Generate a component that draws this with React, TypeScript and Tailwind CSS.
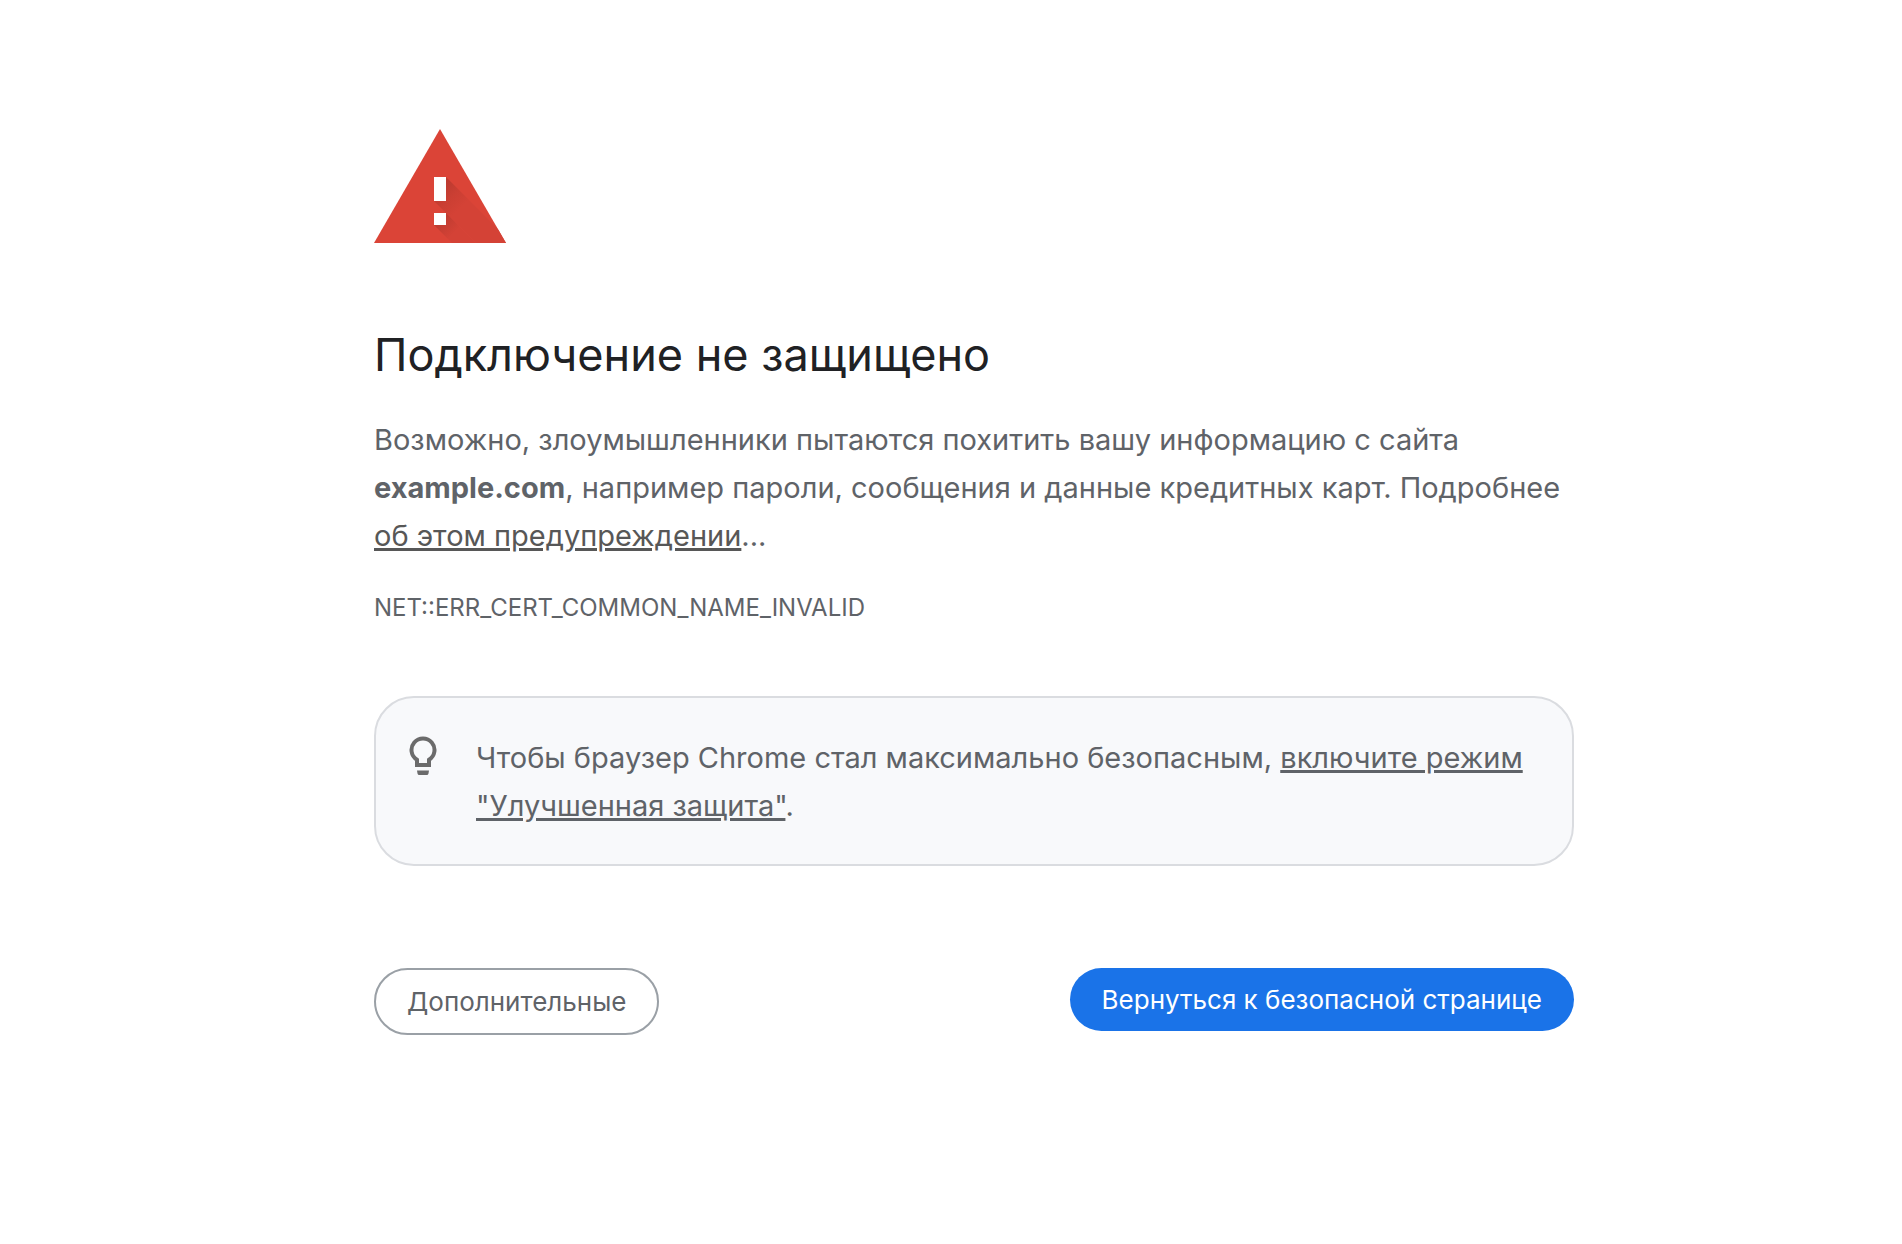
import React from 'react';

function WarningIcon() {
  return (
    <svg viewBox="0 0 132 114" className="block w-[132px] h-[114px]" role="img" aria-label="Предупреждение">
      <defs>
        <clipPath id="triangle">
          <path d="M66 0L132 114H0Z" />
        </clipPath>
        <linearGradient id="barShadow" gradientUnits="userSpaceOnUse" x1="66" y1="60" x2="86" y2="80">
          <stop offset="0" stopColor="#bd3b30" />
          <stop offset="0.5" stopColor="#cb3f33" />
          <stop offset="1" stopColor="#d44236" />
        </linearGradient>
        <linearGradient id="dotShadow" gradientUnits="userSpaceOnUse" x1="66" y1="90" x2="80" y2="104">
          <stop offset="0" stopColor="#bd3b30" />
          <stop offset="1" stopColor="#d44236" />
        </linearGradient>
      </defs>
      <path d="M66 0L132 114H0Z" fill="#db4437" />
      <g clipPath="url(#triangle)">
        <path d="M72 48L138 114H102L60 72Z" fill="url(#barShadow)" />
        <path d="M72 84L102 114H78L60 96Z" fill="url(#dotShadow)" />
      </g>
      <path d="M60 48h12v24H60zM60 84h12v12H60z" fill="#fff" />
    </svg>
  );
}

function BulbIcon() {
  return (
    <svg viewBox="0 0 30 40" className="block w-[30px] h-10 shrink-0" aria-hidden="true">
      <path d="M9 29V23.8A11.5 11.5 0 1 1 21 23.8V29Z" fill="none" stroke="#6b6b6b" strokeWidth="4" />
      <path d="M9 34.5h12l-.5 3a1.8 1.8 0 0 1-1.8 1.5h-7.400a1.8 1.8 0 0 1-1.8-1.5z" fill="#6b6b6b" />
    </svg>
  );
}

export default function App() {
  return (
    <div className="min-h-screen bg-white pl-[46px] pt-[129px] pb-24 text-[#5f6368] font-['Inter','Liberation_Sans',sans-serif]">
      <main className="mx-auto w-full max-w-[1200px]">
        <WarningIcon />

        <h1 className="mt-20 text-[45px] leading-[64px] text-[#202124]">Подключение не защищено</h1>

        <p className="mt-[29px] text-[29px] leading-[48px]">
          Возможно, злоумышленники пытаются похитить вашу информацию с сайта{' '}
          <strong className="font-bold">example.com</strong>, например пароли, сообщения и данные кредитных карт.
          Подробнее{' '}
          <a href="#details" className="text-[#575757] underline decoration-[3px]">об этом предупреждении</a>...
        </p>

        <p className="mt-6 text-[24px] leading-[48px]">NET::ERR_CERT_COMMON_NAME_INVALID</p>

        {/* Enhanced protection promo */}
        <section className="mt-16 flex rounded-[40px] border-2 border-[#dadce0] bg-[#f8f9fb] pl-8 pr-9 pt-9 pb-[34px]">
          <div className="mr-[38px] pt-0.5">
            <BulbIcon />
          </div>
          <p className="text-[29px] leading-[48px]">
            Чтобы браузер Chrome стал максимально безопасным,{' '}
            <a href="#enhanced" className="underline decoration-[3px]">включите режим "Улучшенная защита"</a>.
          </p>
        </section>

        <div className="mt-[102px] flex flex-wrap items-start justify-between gap-4">
          <button type="button" className="rounded-full border-2 border-[#9aa0a6] px-[31px] text-[26px] leading-[63px]">
            Дополнительные
          </button>
          <button type="button" className="rounded-full bg-[#1a73e8] px-8 text-[26px] leading-[63px] text-white">
            Вернуться к безопасной странице
          </button>
        </div>
      </main>
    </div>
  );
}
